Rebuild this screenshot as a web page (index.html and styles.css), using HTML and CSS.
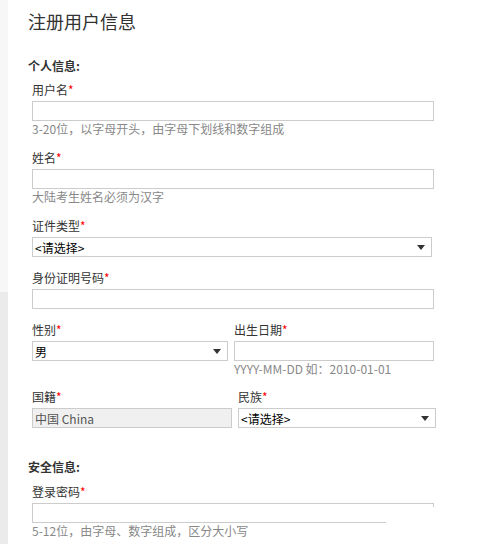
FILE: index.html
```html
<!DOCTYPE html>
<html lang="zh">
<head>
<meta charset="utf-8">
<title>注册用户信息</title>
<link rel="stylesheet" href="styles.css">
</head>
<body>
<div class="page">
  <div class="side"><div class="side-top"></div><div class="side-bottom"></div></div>
  <main class="main">
    <h1 class="title">注册用户信息</h1>

    <h2 class="section">个人信息:</h2>
    <div class="field">
      <div class="label">用户名<span class="req">*</span></div>
      <input class="input full" type="text">
      <div class="hint">3-20位，以字母开头，由字母下划线和数字组成</div>
    </div>
    <div class="field">
      <div class="label">姓名<span class="req">*</span></div>
      <input class="input full" type="text">
      <div class="hint">大陆考生姓名必须为汉字</div>
    </div>
    <div class="field">
      <div class="label">证件类型<span class="req">*</span></div>
      <div class="select sel-wide"><span>&lt;请选择&gt;</span><svg class="caret" width="8" height="5" viewBox="0 0 8 5"><path d="M0 0H8L4 5Z" fill="#333"/></svg></div>
    </div>
    <div class="field">
      <div class="label">身份证明号码<span class="req">*</span></div>
      <input class="input full" type="text">
    </div>
    <div class="row field">
      <div class="col c196">
        <div class="label">性别<span class="req">*</span></div>
        <div class="select w196"><span>男</span><svg class="caret" width="8" height="5" viewBox="0 0 8 5"><path d="M0 0H8L4 5Z" fill="#333"/></svg></div>
      </div>
      <div class="col c200">
        <div class="label">出生日期<span class="req">*</span></div>
        <input class="input w200" type="text">
        <div class="hint">YYYY-MM-DD 如：2010-01-01</div>
      </div>
    </div>
    <div class="row row2">
      <div class="col c200">
        <div class="label">国籍<span class="req">*</span></div>
        <input class="input w200 disabled" type="text" value="中国 China" disabled>
      </div>
      <div class="col c198">
        <div class="label">民族<span class="req">*</span></div>
        <div class="select w198"><span>&lt;请选择&gt;</span><svg class="caret" width="8" height="5" viewBox="0 0 8 5"><path d="M0 0H8L4 5Z" fill="#333"/></svg></div>
      </div>
    </div>

    <h2 class="section section2">安全信息:</h2>
    <div class="field">
      <div class="label">登录密码<span class="req">*</span></div>
      <div class="pwd"><span class="stub"></span><span class="base"></span></div>
      <div class="hint">5-12位，由字母、数字组成，区分大小写</div>
    </div>
  </main>
</div>
</body>
</html>
```

FILE: styles.css
```css
html, body {
  margin: 0;
  padding: 0;
  background: #fff;
}
body {
  font-family: "Noto Sans CJK SC", "Noto Sans", sans-serif;
  font-size: 12px;
  color: #333;
}
.page {
  display: flex;
  min-height: 544px;
}
.side {
  width: 8px;
  flex: none;
  display: flex;
  flex-direction: column;
}
.side-top {
  height: 292px;
  background: #f7f7f7;
}
.side-bottom {
  flex: 1;
  background: #ebebeb;
}
.main {
  padding-left: 20px;
  flex: 1;
}
.title {
  margin: 0;
  padding-top: 9px;
  font-size: 18px;
  line-height: 24px;
  font-weight: normal;
  color: #333;
}
.section {
  margin: 25px 0 8px;
  font-size: 12px;
  line-height: 16px;
  font-weight: bold;
  color: #333;
}
.section2 {
  margin-top: 31px;
  margin-bottom: 9px;
}
.field {
  padding-left: 4px;
  margin-bottom: 13px;
}
.label {
  line-height: 16px;
  margin-bottom: 3px;
  color: #333;
}
.req {
  color: #f00;
}
.hint {
  line-height: 16px;
  color: #888;
}
.input {
  display: block;
  box-sizing: border-box;
  height: 20px;
  border: 1px solid #ccc;
  margin: 0;
  padding: 0 2px;
  font: inherit;
  background: #fff;
  outline: none;
}
.full {
  width: 402px;
}
.w200 {
  width: 200px;
}
.disabled {
  background: #f0f0f0;
  color: #555;
  -webkit-text-fill-color: #555;
  opacity: 1;
}
.select {
  box-sizing: border-box;
  height: 20px;
  border: 1px solid #ccc;
  display: flex;
  align-items: center;
  justify-content: space-between;
  padding: 0 6px 0 2px;
  color: #000;
  background: #fff;
}
.sel-wide {
  width: 400px;
}
.w196 {
  width: 196px;
}
.w198 {
  width: 198px;
}
.caret {
  display: block;
}
.row {
  display: flex;
  gap: 6px;
}
.row2 {
  padding-left: 4px;
}
.row.field {
  margin-bottom: 12px;
}
.c196 {
  width: 196px;
}
.c200 {
  width: 200px;
}
.c198 {
  width: 198px;
}
.pwd {
  box-sizing: border-box;
  width: 402px;
  height: 20px;
  border-top: 1px solid #ccc;
  border-left: 1px solid #ccc;
  display: flex;
  flex-direction: column;
  justify-content: space-between;
}
.stub {
  align-self: flex-end;
  width: 1px;
  height: 3px;
  background: #ccc;
}
.base {
  width: 353px;
  height: 1px;
  background: #ccc;
}
```
